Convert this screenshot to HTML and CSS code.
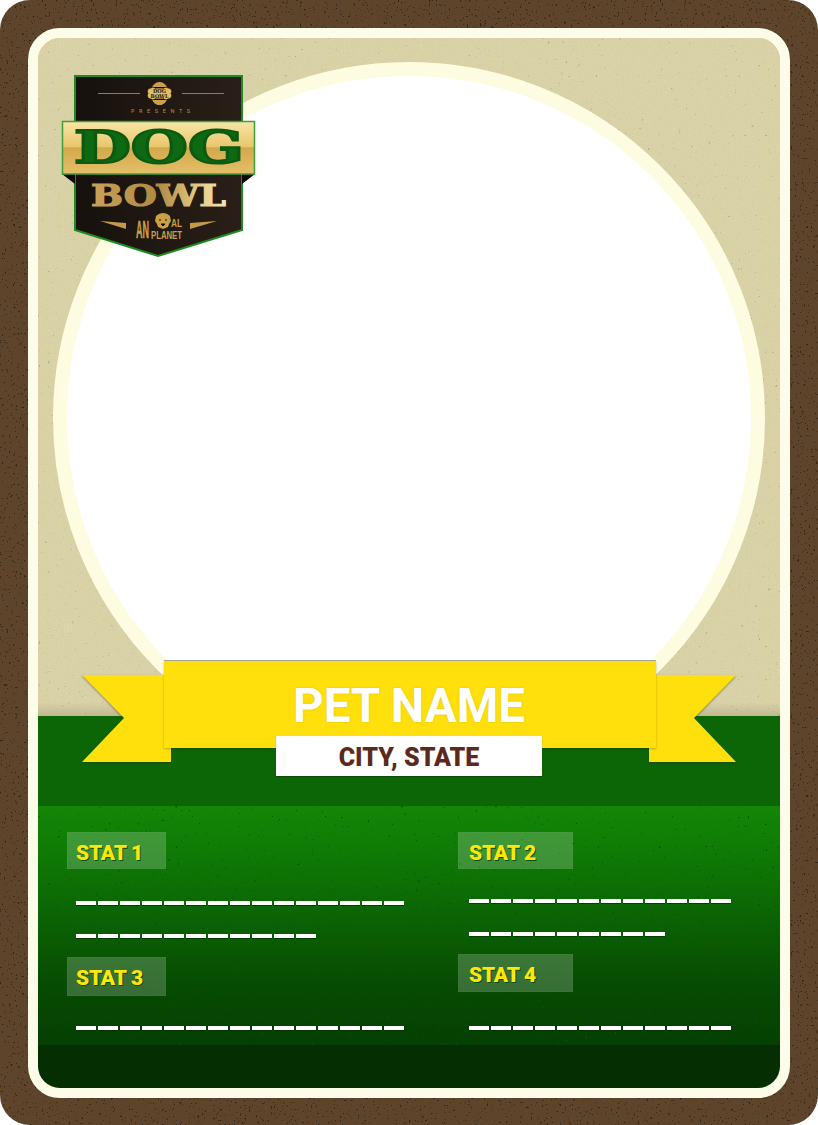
FILE: index.html
```html
<!DOCTYPE html>
<html lang="en">
<head>
<meta charset="utf-8">
<title>Dog Bowl Trading Card</title>
<link rel="stylesheet" href="styles.css">
</head>
<body>
<main class="card">
  <div class="frame">
    <section class="field">
      <div class="circle"></div>
      <svg class="logo" viewBox="0 0 196 184" width="196" height="184" aria-label="Dog Bowl logo">
        <defs>
          <linearGradient id="bar" x1="0" y1="0" x2="0" y2="1">
            <stop offset="0" stop-color="#f8e6a6"/>
            <stop offset=".48" stop-color="#e9c66c"/>
            <stop offset=".5" stop-color="#d3a84c"/>
            <stop offset="1" stop-color="#e4c068"/>
          </linearGradient>
          <linearGradient id="gold" x1="0" y1="0" x2="1" y2="0">
            <stop offset="0" stop-color="#c9a25a"/>
            <stop offset=".5" stop-color="#b08a42"/>
            <stop offset=".8" stop-color="#e4cd88"/>
            <stop offset="1" stop-color="#f2e6b0"/>
          </linearGradient>
          <linearGradient id="shield" x1="0" y1="0" x2="1" y2="0">
            <stop offset="0" stop-color="#16110d"/>
            <stop offset="1" stop-color="#2a1f18"/>
          </linearGradient>
        </defs>
        <path d="M14 2H181V156L97 182L14 156Z" fill="url(#shield)" stroke="#1f8a1e" stroke-width="2"/>
        <path d="M37 19.500H79M121 19.500H163" stroke="#9a7c39" stroke-width="1"/>
        <ellipse cx="98.500" cy="19.500" rx="9" ry="11.500" fill="#c9a04c"/>
        <path d="M90 13.500H107M90 25.500H107" stroke="#16110d" stroke-width="1.200"/>
        <path d="M90 14a3.500 3.500 0 0 1 5 1h7a3.500 3.500 0 0 1 5-1a3.500 3.500 0 0 1 3 5.500a3.500 3.500 0 0 1-3 5.500a3.500 3.500 0 0 1-5-1h-7a3.500 3.500 0 0 1-5 1a3.500 3.500 0 0 1-3-5.500a3.500 3.500 0 0 1 3-5.500Z" fill="#e2bd62" stroke="#16110d" stroke-width=".6"/>
        <text class="badge-text" x="98.500" y="19" text-anchor="middle">DOG</text>
        <text class="badge-text" x="98.500" y="24" text-anchor="middle">BOWL</text>
        <text class="presents" x="70" y="39" textLength="59">PRESENTS</text>
        <path d="M1 100L14 110V100ZM194 100L181 110V100Z" fill="#0c0906"/>
        <rect x="1.500" y="47.500" width="192" height="52.500" fill="url(#bar)" stroke="#3ea03a" stroke-width="1.500"/>
        <text class="dog" x="13" y="89" textLength="170" lengthAdjust="spacingAndGlyphs">DOG</text>
        <text class="bowl" x="30" y="132" textLength="135" lengthAdjust="spacingAndGlyphs" fill="url(#gold)" stroke="url(#gold)">BOWL</text>
        <path d="M39 147L65 149V155ZM156 147L129 149V155Z" fill="#c29a48"/>
        <text class="animal-big" x="75" y="164" textLength="13" lengthAdjust="spacingAndGlyphs">AN</text>
        <path d="M95 142c2-2 5-3 7-3s5 1 7 3l1 5-2 3-1 3-5 2-5-2-1-3-2-3Z" fill="#c9a045"/>
        <path d="M98 146h2M104 146h2M100 150h4l-2 2Z" stroke="#16110d" stroke-width="1" fill="#16110d"/>
        <text class="animal-small" x="110" y="152.500" textLength="11" lengthAdjust="spacingAndGlyphs">AL</text>
        <text class="planet" x="90" y="164.500" textLength="31" lengthAdjust="spacingAndGlyphs">PLANET</text>
      </svg>
    </section>

    <section class="band">
      <svg class="tails" viewBox="0 0 654 88" width="654" height="88" aria-hidden="true">
        <path d="M0 1H89V88H0L42 44Z" fill="#ffe00c"/>
        <path d="M654 1H567V88H654L612 44Z" fill="#ffe00c"/>
      </svg>
      <div class="ribbon">
        <h1 class="pet-name">PET NAME</h1>
        <p class="city">CITY, STATE</p>
      </div>
    </section>

    <section class="stats">
      <div class="col col-left">
        <h2 class="stat-label label-wide">STAT 1</h2>
        <div class="lines lines-first">
          <div class="dash dash-15"></div>
          <div class="dash dash-11"></div>
        </div>
        <h2 class="stat-label label-wide label-lower">STAT 3</h2>
        <div class="lines lines-last">
          <div class="dash dash-15"></div>
        </div>
      </div>
      <div class="col col-right">
        <h2 class="stat-label">STAT 2</h2>
        <div class="lines lines-first-r">
          <div class="dash dash-12"></div>
          <div class="dash dash-9"></div>
        </div>
        <h2 class="stat-label label-lower-r">STAT 4</h2>
        <div class="lines lines-last-r">
          <div class="dash dash-12"></div>
        </div>
      </div>
    </section>
    <div class="footer"></div>
  </div>
</main>
</body>
</html>
```

FILE: styles.css
```css
* { box-sizing: border-box; }
html, body { margin: 0; padding: 0; background: #fff; }
body { width: 818px; height: 1125px; overflow: hidden; font-family: Roboto, "Liberation Sans", sans-serif; }

.card {
  width: 818px;
  height: 1125px;
  padding: 28px;
  border-radius: 30px;
  background-color: #5d442b;
  background-image: url("data:image/svg+xml,%3Csvg xmlns='http://www.w3.org/2000/svg' width='818' height='1125'%3E%3Cfilter id='n' x='0' y='0' width='100%25' height='100%25'%3E%3CfeTurbulence type='fractalNoise' baseFrequency='.45' numOctaves='3' seed='4'/%3E%3CfeColorMatrix values='0 0 0 0 .03 0 0 0 0 .02 0 0 0 0 .01 0 0 0 12 -8.100'/%3E%3C/filter%3E%3Crect width='100%25' height='100%25' filter='url(%23n)'/%3E%3C/svg%3E");
}

.frame {
  position: relative;
  width: 762px;
  height: 1070px;
  border: 10px solid #fdfce8;
  border-radius: 32px;
  overflow: hidden;
  display: flex;
  flex-direction: column;
  background: #d9d2a5;
}

.field {
  height: 678px;
  flex: none;
  background-color: #dad3a6;
  background-image:
    linear-gradient(to bottom, transparent 98%, rgba(120,110,80,.25) 100%),
    url("data:image/svg+xml,%3Csvg xmlns='http://www.w3.org/2000/svg' width='742' height='678'%3E%3Cfilter id='s' x='0' y='0' width='100%25' height='100%25'%3E%3CfeTurbulence type='fractalNoise' baseFrequency='.3' numOctaves='3' seed='9'/%3E%3CfeColorMatrix values='0 0 0 0 .45 0 0 0 0 .42 0 0 0 0 .3 0 0 0 10 -7.600'/%3E%3C/filter%3E%3Cfilter id='m' x='0' y='0' width='100%25' height='100%25'%3E%3CfeTurbulence type='fractalNoise' baseFrequency='.6' numOctaves='2' seed='2'/%3E%3CfeColorMatrix values='0 0 0 0 .6 0 0 0 0 .55 0 0 0 0 .38 0 0 0 1 -.42'/%3E%3C/filter%3E%3Crect width='100%25' height='100%25' filter='url(%23m)'/%3E%3Crect width='100%25' height='100%25' filter='url(%23s)'/%3E%3C/svg%3E");
}

.circle {
  position: absolute;
  left: 15px;
  top: 24px;
  width: 712px;
  height: 712px;
  border-radius: 50%;
  background: #fff;
  border: 14px solid #fdfce0;
}

.logo {
  position: absolute;
  left: 23px;
  top: 36px;
  overflow: visible;
}
.badge-text { font: 700 5px "DejaVu Serif", serif; fill: #1c1610; }
.presents { font: 400 5.500px Roboto, sans-serif; fill: #b0924c; }
.dog { font: 700 44px "DejaVu Serif", serif; fill: #0d6a12; stroke: #0b5a10; stroke-width: 2.200px; }
.bowl { font: 700 29px "DejaVu Serif", serif; stroke-width: 1.200px; }
.animal-big { font: 700 24px "Liberation Sans", sans-serif; fill: #c9a045; stroke: #c9a045; stroke-width: .5px; }
.animal-small { font: 700 11px "Liberation Sans", sans-serif; fill: #c9a045; }
.planet { font: 700 11px "Liberation Sans", sans-serif; fill: #c9a045; }

.band {
  position: relative;
  height: 90px;
  flex: none;
  background: #0d6606;
}

.tails {
  position: absolute;
  left: 44px;
  top: -42px;
  filter: drop-shadow(0 1px 1px rgba(30,40,10,.45));
}

.ribbon {
  position: absolute;
  left: 126px;
  top: -55px;
  width: 492px;
  height: 87px;
  background: #ffe00c;
  box-shadow: 0 1px 2px rgba(0,0,0,.25), 0 -1px 0 rgba(110,110,90,.6);
  text-align: center;
}

.pet-name {
  margin: 17px 0 0;
  padding-right: 2px;
  font-size: 47.500px;
  line-height: 56px;
  font-weight: 700;
  color: #fff;
  text-shadow: 0 0 2px rgba(190,160,0,.5);
}

.city {
  position: absolute;
  left: 112px;
  top: 75px;
  width: 266px;
  height: 40px;
  margin: 0;
  background: #fff;
  box-shadow: 0 1px 1px rgba(0,40,0,.4);
  font-size: 25px;
  line-height: 43px;
  font-weight: 900;
  color: #5c2a1c;
}

.stats {
  flex: 1;
  display: flex;
  padding: 26px 0 0 29px;
  background-color: #0f7a05;
  background-image:
    url("data:image/svg+xml,%3Csvg xmlns='http://www.w3.org/2000/svg' width='742' height='239'%3E%3Cfilter id='g' x='0' y='0' width='100%25' height='100%25'%3E%3CfeTurbulence type='fractalNoise' baseFrequency='.3' numOctaves='3' seed='7'/%3E%3CfeColorMatrix values='0 0 0 0 0 0 0 0 0 .1 0 0 0 0 0 0 0 0 12 -9.200'/%3E%3C/filter%3E%3Crect width='100%25' height='100%25' filter='url(%23g)'/%3E%3C/svg%3E"),
    linear-gradient(to bottom, #138607 0, #0f7a05 20%, #074b03 75%, #054002 100%);
}

.col { display: flex; flex-direction: column; align-items: flex-start; }
.col-left { width: 391px; }

.stat-label {
  width: 115px;
  height: 37px;
  margin: 0;
  padding-left: 11px;
  background: rgba(255,255,255,.2);
  box-shadow: inset 0 0 0 1px rgba(255,255,255,.03);
  font-size: 21px;
  line-height: 42px;
  font-weight: 900;
  letter-spacing: -.2px;
  color: #ffe60a;
  text-shadow: 1px 1px 0 rgba(0,70,0,.85);
}
.label-wide { width: 99px; padding-left: 9px; }
.label-lower { height: 39px; line-height: 43px; margin-top: 19px; }
.label-lower-r { height: 38px; line-height: 43px; margin-top: 18px; }

.lines { display: flex; flex-direction: column; gap: 29px; margin-left: 9px; }
.col-right .lines { margin-left: 11px; }
.lines-first { margin-top: 32px; }
.lines-last { margin-top: 30px; }
.lines-first-r { margin-top: 30px; }
.lines-last-r { margin-top: 34px; }

.dash {
  height: 4px;
  background-image: repeating-linear-gradient(to right, #fff 0 20px, transparent 20px 22px);
  filter: drop-shadow(0 1px 0 rgba(0,40,0,.6));
}
.dash-15 { width: 328px; }
.dash-12 { width: 262px; }
.dash-11 { width: 240px; }
.dash-9 { width: 196px; }

.footer {
  height: 43px;
  flex: none;
  background: #052e02;
}
```
